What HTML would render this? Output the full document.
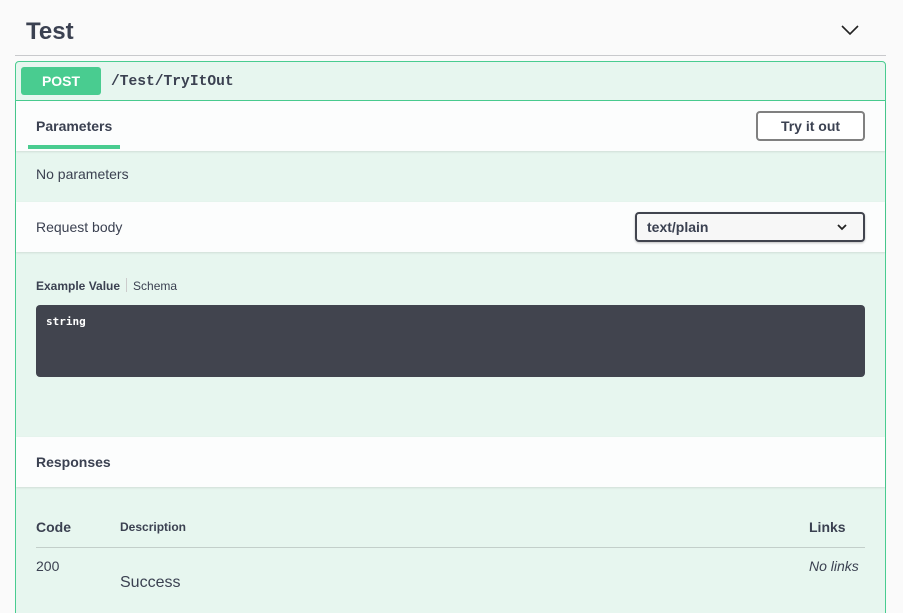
<!DOCTYPE html>
<html><head><meta charset="utf-8"><style>
*{margin:0;padding:0;box-sizing:border-box}
html,body{width:903px;height:613px;overflow:hidden}
body{background:#fafafa;font-family:"Liberation Sans",sans-serif;color:#3b4151;position:relative}
.a{position:absolute;white-space:nowrap}
.b{font-weight:bold}
</style></head><body>
<div class="a b" style="left:26px;top:18px;font-size:24px;line-height:28px">Test</div>
<svg class="a" style="left:840px;top:22px" width="20" height="16" viewBox="0 0 20 16"><path d="M2 4 L10 12 L18 4" fill="none" stroke="#222" stroke-width="1.6"/></svg>
<div class="a" style="left:15px;top:55px;width:871px;height:1px;background:#c8c9cc"></div>
<div class="a" style="left:15px;top:61px;width:871px;height:553px;border:1px solid #49cc90;border-radius:4px 4px 0 0;background:#e7f6ef"></div>
<div class="a" style="left:16px;top:100px;width:869px;height:1px;background:#49cc90"></div>
<div class="a b" style="left:21px;top:67px;width:80px;height:28px;background:#49cc90;border-radius:3px;color:#fff;font-size:14px;line-height:28px;text-align:center">POST</div>
<div class="a b" style="left:111px;top:73px;font-family:'Liberation Mono',monospace;font-size:14.6px;line-height:18px">/Test/TryItOut</div>
<div class="a" style="left:16px;top:101px;width:869px;height:50px;background:#fcfdfd;box-shadow:0 1px 2px rgba(0,0,0,.1)"></div>
<div class="a b" style="left:36px;top:118px;font-size:14px;line-height:16px">Parameters</div>
<div class="a" style="left:28px;top:145px;width:92px;height:4px;background:#49cc90"></div>
<div class="a b" style="left:756px;top:111px;width:109px;height:30px;border:2px solid #808080;border-radius:4px;font-size:14px;line-height:26px;text-align:center;background:#fff">Try it out</div>
<div class="a" style="left:36px;top:166px;font-size:14px;line-height:16px">No parameters</div>
<div class="a" style="left:16px;top:202px;width:869px;height:50px;background:#fcfdfd;box-shadow:0 1px 2px rgba(0,0,0,.1)"></div>
<div class="a" style="left:36px;top:219px;font-size:14px;line-height:16px">Request body</div>
<div class="a b" style="left:635px;top:212px;width:230px;height:30px;border:2px solid #41444e;border-radius:4px;background:#f7f7f7;font-size:14px;line-height:26px;padding-left:10px;box-shadow:0 1px 2px rgba(0,0,0,.25)">text/plain</div>
<svg class="a" style="left:836px;top:222px" width="12" height="10" viewBox="0 0 12 10"><path d="M2 3 L6 7 L10 3" fill="none" stroke="#222" stroke-width="1.8"/></svg>
<div class="a" style="left:36px;top:278px;font-size:12px;line-height:14px"><span class="b">Example Value</span><span style="display:inline-block;width:1px;height:14px;background:#ccc;margin:0 6px;vertical-align:-2px"></span>Schema</div>
<div class="a" style="left:36px;top:305px;width:829px;height:72px;background:#41444e;border-radius:4px"></div>
<div class="a b" style="left:46px;top:315px;font-family:'DejaVu Sans Mono','Liberation Mono',monospace;font-size:11px;line-height:14px;color:#fff">string</div>
<div class="a" style="left:16px;top:437px;width:869px;height:50px;background:#fcfdfd;box-shadow:0 1px 2px rgba(0,0,0,.1)"></div>
<div class="a b" style="left:36px;top:454px;font-size:14px;line-height:16px">Responses</div>
<div class="a b" style="left:36px;top:519px;font-size:14px;line-height:16px">Code</div>
<div class="a b" style="left:120px;top:520px;font-size:12px;line-height:14px">Description</div>
<div class="a b" style="left:809px;top:519px;font-size:14px;line-height:16px">Links</div>
<div class="a" style="left:36px;top:547px;width:829px;height:1px;background:#c3cfca"></div>
<div class="a" style="left:36px;top:558px;font-size:14px;line-height:16px">200</div>
<div class="a" style="left:120px;top:574px;font-size:16px;line-height:18px">Success</div>
<div class="a" style="left:809px;top:558px;font-size:14px;line-height:16px;font-style:italic">No links</div>
</body></html>
